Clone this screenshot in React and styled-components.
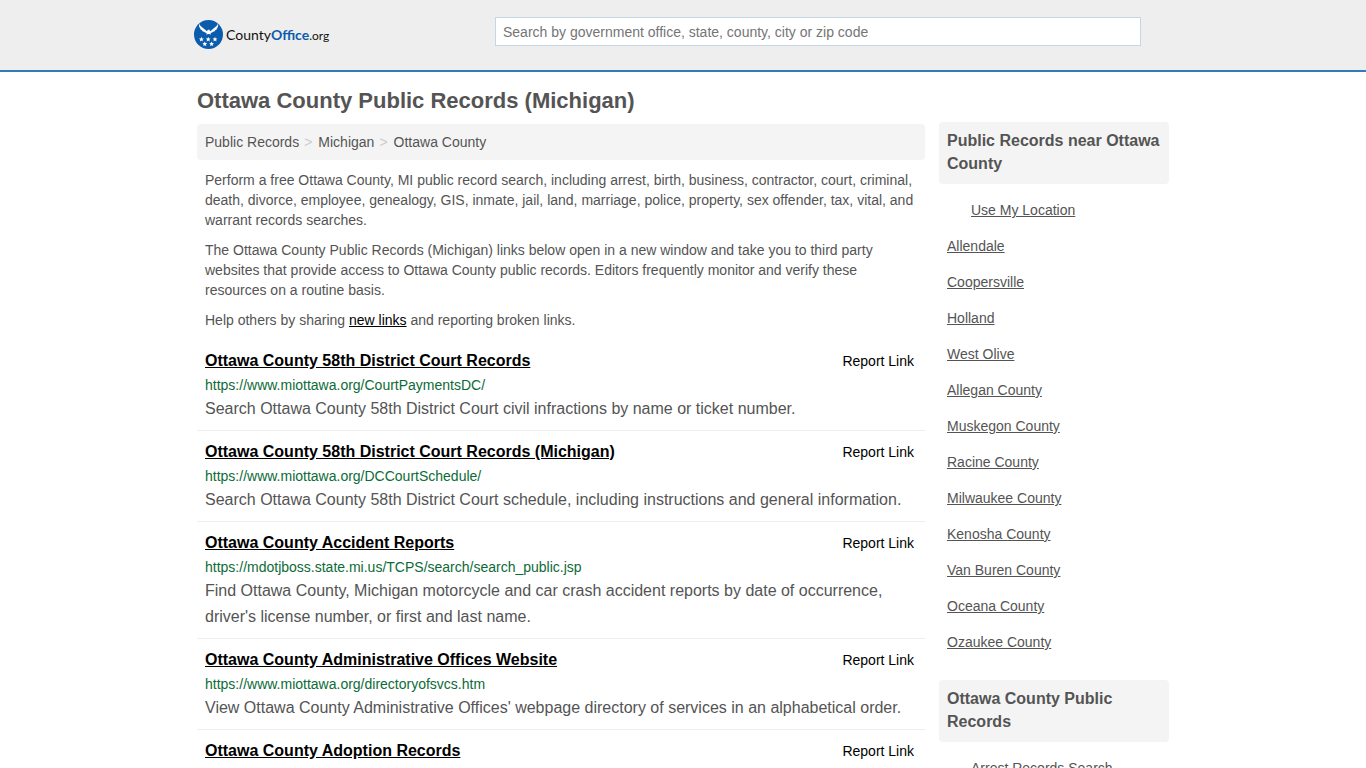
import { useState } from "react";
import styled, { createGlobalStyle } from "styled-components";

const results = [
  {
    title: "Ottawa County 58th District Court Records",
    url: "https://www.miottawa.org/CourtPaymentsDC/",
    description:
      "Search Ottawa County 58th District Court civil infractions by name or ticket number.",
  },
  {
    title: "Ottawa County 58th District Court Records (Michigan)",
    url: "https://www.miottawa.org/DCCourtSchedule/",
    description:
      "Search Ottawa County 58th District Court schedule, including instructions and general information.",
  },
  {
    title: "Ottawa County Accident Reports",
    url: "https://mdotjboss.state.mi.us/TCPS/search/search_public.jsp",
    description:
      "Find Ottawa County, Michigan motorcycle and car crash accident reports by date of occurrence, driver's license number, or first and last name.",
  },
  {
    title: "Ottawa County Administrative Offices Website",
    url: "https://www.miottawa.org/directoryofsvcs.htm",
    description:
      "View Ottawa County Administrative Offices' webpage directory of services in an alphabetical order.",
  },
  { title: "Ottawa County Adoption Records" },
];

const nearby = [
  "Allendale",
  "Coopersville",
  "Holland",
  "West Olive",
  "Allegan County",
  "Muskegon County",
  "Racine County",
  "Milwaukee County",
  "Kenosha County",
  "Van Buren County",
  "Oceana County",
  "Ozaukee County",
];

const stars = [
  [7.4, 19.4],
  [14.2, 19.4],
  [21, 19.4],
  [10.8, 24],
  [17.6, 24],
];

function starPoints(cx, cy) {
  return Array.from({ length: 10 }, (_, i) => {
    const radius = i % 2 ? 1.2 : 2.6;
    const angle = (Math.PI / 5) * i - Math.PI / 2;

    return `${cx + radius * Math.cos(angle)},${cy + radius * Math.sin(angle)}`;
  }).join(" ");
}

function Emblem() {
  return (
    <svg width="29" height="29" viewBox="0 0 29 29" aria-hidden="true">
      <circle cx="14.5" cy="14.5" r="14.5" fill="#0b5cad" />
      <path
        fill="#fff"
        d="M5.200 3.800C6.200 6.200 8.600 7.700 10.600 9.200C11.600 10 12.400 10.900 13.200 11.200L13.500 9.900L15.300 9.600L16 11.200C16.900 10.900 17.600 10 18.600 9.200C20.600 7.700 23 6.200 24 3.800C24.400 5.700 24.100 7 23.200 8L22.600 9.400L21.300 10.200L20.400 11.400L19 11.700L18.200 12.500L16.500 12.900L17 14.500L14.600 13.900L12.200 14.500L12.700 12.900L11 12.500L10.200 11.700L8.800 11.400L7.900 10.200L6.600 9.400L6 8C5.100 7 4.800 5.700 5.200 3.800Z"
      />
      {stars.map(([x, y]) => (
        <polygon key={`${x}-${y}`} points={starPoints(x, y)} fill="#fff" />
      ))}
    </svg>
  );
}

function Result({ title, url, description }) {
  return (
    <ResultItem>
      <ResultHead>
        <ResultTitle>
          <a href="#record">{title}</a>
        </ResultTitle>
        <ReportButton type="button">Report Link</ReportButton>
      </ResultHead>
      {url && <ResultUrl>{url}</ResultUrl>}
      {description && <ResultText>{description}</ResultText>}
    </ResultItem>
  );
}

function App() {
  const [query, setQuery] = useState("");

  return (
    <>
      <GlobalStyle />
      <Header>
        <HeaderInner>
          <Logo href="#home" aria-label="CountyOffice.org">
            <Emblem />
            <LogoText>
              County<b>Office</b>
              <small>.org</small>
            </LogoText>
          </Logo>
          <SearchForm role="search" onSubmit={ev => ev.preventDefault()}>
            <SearchInput
              type="text"
              aria-label="Search"
              placeholder="Search by government office, state, county, city or zip code"
              value={query}
              onChange={ev => setQuery(ev.target.value)}
            />
          </SearchForm>
        </HeaderInner>
      </Header>
      <Page>
        <Title>Ottawa County Public Records (Michigan)</Title>
        <Columns>
          <Main>
            <Breadcrumbs aria-label="Breadcrumb">
              <a href="#records">Public Records</a>
              <Separator>&gt;</Separator>
              <a href="#michigan">Michigan</a>
              <Separator>&gt;</Separator>
              <a href="#ottawa">Ottawa County</a>
            </Breadcrumbs>
            <Intro>
              <p>
                Perform a free Ottawa County, MI public record search, including
                arrest, birth, business, contractor, court, criminal, death,
                divorce, employee, genealogy, GIS, inmate, jail, land, marriage,
                police, property, sex offender, tax, vital, and warrant records
                searches.
              </p>
              <p>
                The Ottawa County Public Records (Michigan) links below open in
                a new window and take you to third party websites that provide
                access to Ottawa County public records. Editors frequently
                monitor and verify these resources on a routine basis.
              </p>
              <p>
                Help others by sharing <a href="#new">new links</a> and
                reporting broken links.
              </p>
            </Intro>
            <ResultList>
              {results.map(result => (
                <Result key={result.title} {...result} />
              ))}
            </ResultList>
          </Main>
          <Sidebar>
            <section>
              <SideTitle>Public Records near Ottawa County</SideTitle>
              <SideList>
                <SideItem $indent>
                  <a href="#location">Use My Location</a>
                </SideItem>
                {nearby.map(place => (
                  <SideItem key={place}>
                    <a href="#place">{place}</a>
                  </SideItem>
                ))}
              </SideList>
            </section>
            <section>
              <SideTitle>Ottawa County Public Records</SideTitle>
              <SideList>
                <SideItem $indent>
                  <a href="#arrest">Arrest Records Search</a>
                </SideItem>
              </SideList>
            </section>
          </Sidebar>
        </Columns>
      </Page>
    </>
  );
}

const GlobalStyle = createGlobalStyle`
  * {
    box-sizing: border-box;
  }

  body {
    margin: 0;

    background-color: #fff;
    color: #545454;
    font: 14px/20px "Liberation Sans", Arial, sans-serif;
  }

  h1, h2, h3, p, ul {
    margin: 0;
    padding: 0;
  }

  a {
    color: inherit;
  }
`;

const Header = styled.header`
  padding: 17px 0 21px;

  border-bottom: 2px solid #337ab7;
  background-color: #eee;
`;

const HeaderInner = styled.div`
  display: flex;
  align-items: flex-start;
  gap: 24px;
  max-width: 978px;
  margin: 0 auto;
`;

const Logo = styled.a`
  display: flex;
  flex: 0 0 277px;
  align-items: center;
  gap: 3px;
  padding-top: 3px;

  text-decoration: none;
`;

const LogoText = styled.span`
  padding-top: 2px;

  color: #111;
  font-family: Lato, sans-serif;
  font-size: 14px;

  b {
    color: #0b5cad;
    font-weight: 700;
  }

  small {
    font-size: 12px;
    font-weight: 400;
  }
`;

const SearchForm = styled.form`
  flex: 0 1 646px;
`;

const SearchInput = styled.input`
  display: block;
  width: 100%;
  height: 29px;
  padding: 0 7px;

  border: 1px solid #c5d6e4;
  border-radius: 0;
  background-color: #fff;
  color: #545454;
  font: inherit;

  &::placeholder {
    color: #757575;
  }
`;

const Page = styled.div`
  max-width: 972px;
  margin: 0 auto;
  padding-top: 16px;
`;

const Title = styled.h1`
  font-size: 22px;
  line-height: 26px;
`;

const Columns = styled.div`
  display: flex;
  align-items: flex-start;
  gap: 14px;
  padding-top: 8px;
`;

const Main = styled.main`
  flex: 1;
  min-width: 0;
  padding-top: 2px;
`;

const Breadcrumbs = styled.nav`
  display: flex;
  gap: 5px;
  padding: 8px;

  border-radius: 4px;
  background-color: #f4f4f4;

  a {
    text-decoration: none;
  }
`;

const Separator = styled.span`
  padding-right: 1px;

  color: #ccc;
`;

const Intro = styled.div`
  display: flex;
  flex-direction: column;
  gap: 10px;
  padding: 10px 8px;

  a {
    color: #000;
  }
`;

const ResultList = styled.ul`
  list-style: none;
`;

const ResultItem = styled.li`
  padding: 8px;

  & + & {
    border-top: 1px solid #eee;
  }
`;

const ResultHead = styled.div`
  display: flex;
  justify-content: space-between;
  align-items: baseline;

  color: #000;
`;

const ResultTitle = styled.h2`
  font-size: 16px;
  line-height: 26px;
`;

const ReportButton = styled.button`
  padding: 0 3px;

  border: 0;
  background: none;
  color: #000;
  font: inherit;
  cursor: pointer;
`;

const ResultUrl = styled.p`
  color: #0c6b37;
  line-height: 22px;
`;

const ResultText = styled.p`
  font-size: 16px;
  line-height: 26px;
`;

const Sidebar = styled.aside`
  display: flex;
  flex: 0 0 230px;
  flex-direction: column;
  gap: 20px;
`;

const SideTitle = styled.h3`
  padding: 7px 8px 9px;

  border-radius: 4px;
  background-color: #f4f4f4;
  font-size: 16px;
  line-height: 23px;
`;

const SideList = styled.ul`
  padding: 8px 8px 0;

  list-style: none;
`;

const SideItem = styled.li`
  padding: 8px 0 8px ${({ $indent }) => ($indent ? "24px" : "0")};
`;

export default App;
